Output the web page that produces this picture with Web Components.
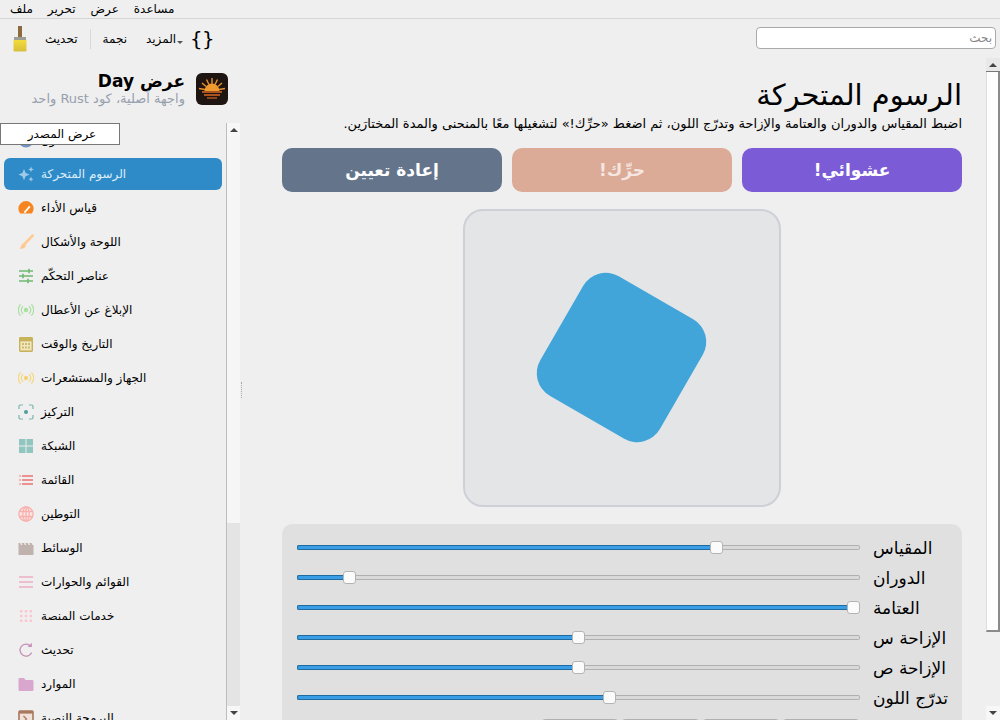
<!DOCTYPE html>
<html lang="ar">
<head>
<meta charset="utf-8">
<title>عرض Day</title>
<style>
html,body{margin:0;padding:0;height:720px;overflow:hidden;background:#efefef;color:#000;font-family:"DejaVu Sans",sans-serif;font-size:12px}
</style>
</head>
<body>
<x-app>
  <x-menubar slot="menu"><span>ملف</span><span>تحرير</span><span>عرض</span><span>مساعدة</span></x-menubar>
  <x-toolbar slot="tools"></x-toolbar>
  <x-sidebar slot="side">
    <x-nav icon="about">حول</x-nav>
    <x-nav icon="sparkle" selected>الرسوم المتحركة</x-nav>
    <x-nav icon="gauge">قياس الأداء</x-nav>
    <x-nav icon="brush">اللوحة والأشكال</x-nav>
    <x-nav icon="sliders">عناصر التحكّم</x-nav>
    <x-nav icon="signal">الإبلاغ عن الأعطال</x-nav>
    <x-nav icon="calendar">التاريخ والوقت</x-nav>
    <x-nav icon="sensor">الجهاز والمستشعرات</x-nav>
    <x-nav icon="focus">التركيز</x-nav>
    <x-nav icon="grid">الشبكة</x-nav>
    <x-nav icon="list">القائمة</x-nav>
    <x-nav icon="globe">التوطين</x-nav>
    <x-nav icon="media">الوسائط</x-nav>
    <x-nav icon="menu">القوائم والحوارات</x-nav>
    <x-nav icon="apps">خدمات المنصة</x-nav>
    <x-nav icon="refresh">تحديث</x-nav>
    <x-nav icon="folder">الموارد</x-nav>
    <x-nav icon="script">البرمجة النصية</x-nav>
  </x-sidebar>
  <x-main slot="main">
    <x-page-title>الرسوم المتحركة</x-page-title>
    <x-desc>اضبط المقياس والدوران والعتامة والإزاحة وتدرّج اللون، ثم اضغط «حرِّك!» لتشغيلها معًا بالمنحنى والمدة المختارَين.</x-desc>
    <x-actions>
      <x-action color="#64748b">إعادة تعيين</x-action>
      <x-action color="#dcab98" dim>حرِّك!</x-action>
      <x-action color="#7b5cd6">عشوائي!</x-action>
    </x-actions>
    <x-preview></x-preview>
    <x-controls>
      <x-slider value="0.751">المقياس</x-slider>
      <x-slider value="0.0836">الدوران</x-slider>
      <x-slider value="1">العتامة</x-slider>
      <x-slider value="0.5">الإزاحة س</x-slider>
      <x-slider value="0.5">الإزاحة ص</x-slider>
      <x-slider value="0.556">تدرّج اللون</x-slider>
      <x-segments></x-segments>
    </x-controls>
  </x-main>
</x-app>
<script>
const ICONS = {
  about:'<circle cx="8" cy="8" r="7.5" fill="#6f93c4"/>',
  sparkle:'<g fill="#9fcbe8"><path d="M6 3 L7.6 7 L11.6 8.6 L7.6 10.2 L6 14.2 L4.4 10.2 L.4 8.6 L4.4 7Z"/><path d="M13 .6 L13.8 2.6 L15.8 3.4 L13.8 4.2 L13 6.2 L12.2 4.2 L10.2 3.4 L12.2 2.6Z"/><path d="M13 10.6 L13.8 12.4 L15.6 13.2 L13.8 14 L13 15.8 L12.2 14 L10.4 13.2 L12.2 12.4Z"/></g>',
  gauge:'<path d="M2.2 13.6 A7.6 7.6 0 1 1 13.8 13.6Z" fill="#f6851f"/><path d="M6.4 12.6 L11.8 6.4" stroke="#fff" stroke-width="1.8"/>',
  brush:'<path d="M14.6 1.6 L6.6 9.8" stroke="#ffc98f" stroke-width="2.6" stroke-linecap="round"/><path d="M5.6 9.6 C2.8 10.2 3.6 13 1.4 14.6 C4.4 15.4 8 13.8 7.8 11.6Z" fill="#ffc890"/>',
  sliders:'<g stroke="#6fb872" stroke-width="1.3" fill="none"><path d="M1 3H15M1 8H15M1 13H15"/><path d="M11 .8V5.2M5 5.8V10.2M10 10.8V15.2" stroke-width="1.6"/></g>',
  signal:'<g fill="none" stroke="#a8e0a0" stroke-width="1.2"><circle cx="8" cy="8" r="1.6" fill="#a8e0a0"/><path d="M5 4.2A5 5 0 0 0 5 11.8M11 4.2A5 5 0 0 1 11 11.8M2.6 2.4A8 8 0 0 0 2.6 13.6M13.4 2.4A8 8 0 0 1 13.4 13.6"/></g>',
  calendar:'<rect x="1" y="1" width="14" height="15" rx="1.4" fill="#c8b25a"/><rect x="2.4" y="5.4" width="11.2" height="9" fill="#f1e7bf"/><g fill="#cfbb70"><rect x="4" y="7" width="2" height="2"/><rect x="7" y="7" width="2" height="2"/><rect x="10" y="7" width="2" height="2"/><rect x="4" y="10.5" width="2" height="2"/><rect x="7" y="10.5" width="2" height="2"/><rect x="10" y="10.5" width="2" height="2"/></g>',
  sensor:'<g fill="none" stroke="#f5d67c" stroke-width="1.2"><circle cx="8" cy="8" r="1.6" fill="#f5c95c"/><path d="M5 4.2A5 5 0 0 0 5 11.8M11 4.2A5 5 0 0 1 11 11.8M2.6 2.4A8 8 0 0 0 2.6 13.6M13.4 2.4A8 8 0 0 1 13.4 13.6"/></g>',
  focus:'<g fill="none" stroke="#7ab5b0" stroke-width="1.2"><path d="M1 5V2.4Q1 1 2.4 1H5M11 1H13.6Q15 1 15 2.4V5M15 11V13.6Q15 15 13.6 15H11M5 15H2.4Q1 15 1 13.6V11"/></g><circle cx="8" cy="8" r="2" fill="#4f9f99"/>',
  grid:'<g fill="#90c6bd"><rect x="1" y="1" width="6.5" height="6.5"/><rect x="8.5" y="1" width="6.5" height="6.5"/><rect x="1" y="8.5" width="6.5" height="6.5"/><rect x="8.5" y="8.5" width="6.5" height="6.5"/></g>',
  list:'<g stroke="#ee9090" stroke-width="1.8"><path d="M4 4H15M4 8H15M4 12H15"/><path d="M1 4H3M1 8H3M1 12H3" stroke="#f5b5b5"/></g>',
  globe:'<g fill="#fde6e4" stroke="#f7b0ac" stroke-width="1.3"><circle cx="8" cy="8" r="7.1"/><ellipse cx="8" cy="8" rx="3.2" ry="7.1"/><path d="M8 .9V15.1M1.2 5.5H14.8M1.2 10.5H14.8"/></g>',
  media:'<path d="M.5 3H2.2L3 5H4.4L3.6 3H6L6.8 5H8.2L7.4 3H9.8L10.6 5H12L11.2 3H13.6L14.4 5H15.5V15H.5Z" fill="#c0b2ad"/>',
  menu:'<g stroke="#eeadc4" stroke-width="1.7"><path d="M1 3H15M1 8H15M1 13H15"/></g>',
  apps:'<g fill="#fcc4d3"><rect x="2" y="2" width="2.4" height="2.4"/><rect x="6.8" y="2" width="2.4" height="2.4"/><rect x="11.6" y="2" width="2.4" height="2.4"/><rect x="2" y="6.8" width="2.4" height="2.4"/><rect x="6.8" y="6.8" width="2.4" height="2.4"/><rect x="11.6" y="6.8" width="2.4" height="2.4"/><rect x="2" y="11.6" width="2.4" height="2.4"/><rect x="6.8" y="11.6" width="2.4" height="2.4"/><rect x="11.6" y="11.6" width="2.4" height="2.4"/></g>',
  refresh:'<path d="M13.6 10.4A6 6 0 1 1 12.4 4" fill="none" stroke="#c88fb5" stroke-width="1.3"/><path d="M13.8 .8V5H9.6Z" fill="#c88fb5"/>',
  folder:'<path d="M.5 3.2Q.5 2 1.7 2H6L7.6 4H14.3Q15.5 4 15.5 5.2V13.8Q15.5 15 14.3 15H1.7Q.5 15 .5 13.8Z" fill="#d9a6cd"/>',
  script:'<rect x="1" y="1" width="14" height="14" rx="1" fill="#f0e2da" stroke="#a9785e" stroke-width="1.6"/><rect x="1" y="1" width="14" height="2.6" fill="#a9785e"/><path d="M5.5 6L8.5 9L5.5 12" fill="none" stroke="#a9785e" stroke-width="1.2"/>'
};

function define(name, css, html, init){
  customElements.define(name, class extends HTMLElement{
    constructor(){ super(); this.attachShadow({mode:'open'}); }
    connectedCallback(){
      this.shadowRoot.innerHTML = '<style>'+css+'</style>'+(typeof html==='function'?html(this):html);
      if(init) init(this);
    }
  });
}

define('x-app',
 ':host{display:grid;grid-template-rows:19px 39px 662px;grid-template-columns:240px 760px;height:720px;overflow:hidden;position:relative}'+
 '.a{grid-column:1/3}.tip{position:absolute;left:0;top:123px;box-sizing:border-box;width:120px;height:22px;background:#fff;border:1px solid #777;font-size:12px;display:flex;align-items:center;justify-content:center;direction:rtl;padding-left:4px}',
 '<div class="a"><slot name="menu"></slot></div><div class="a"><slot name="tools"></slot></div><slot name="side"></slot><slot name="main"></slot><div class="tip">عرض المصدر</div>');

define('x-menubar',
 ':host{display:flex;box-sizing:border-box;height:19px;gap:15px;padding:0 0 0 10px;border-bottom:1px solid #d4d4d4;font-size:12px;line-height:17px;align-items:center}',
 '<slot></slot>');

define('x-toolbar',
 ':host{display:flex;box-sizing:border-box;height:39px;align-items:center;padding:0 4px 0 10px;font-size:12px}'+
 'svg{display:block}.t{direction:rtl}.up{margin-left:15px}.sep{width:1px;height:20px;background:#d8d8d8;margin:0 12px}.more{margin-left:19px}'+
 '.arr{width:0;height:0;border:3px solid transparent;border-top:3px solid #555;border-bottom:0;margin:8px 0 0 1px}'+
 '.brace{font:20px "DejaVu Sans Mono",monospace;margin-left:7px;white-space:nowrap}'+
 '.s{margin-left:auto;margin-bottom:2px;box-sizing:border-box;width:240px;height:22px;background:#fff;border:1px solid #aaa;border-radius:4px;direction:rtl;color:#888;font-size:12px;line-height:20px;padding:0 3px}',
 '<svg width="20" height="26" viewBox="0 0 20 26"><defs><linearGradient id="y" x1="0" y1="0" x2="0" y2="1"><stop offset="0" stop-color="#f3dc3a"/><stop offset="1" stop-color="#d8bf3a"/></linearGradient></defs><rect x="8" y="0" width="4" height="11" fill="#8b6a3e"/><rect x="4" y="11" width="12" height="3" fill="#9d9d95"/><path d="M3.5 14H16.5V24.5Q16.5 25.5 15.5 25.5H4.5Q3.5 25.5 3.5 24.5Z" fill="url(#y)"/></svg>'+
 '<span class="t up">تحديث</span><span class="sep"></span><span class="t">نجمة</span><span class="t more">المزيد</span><span class="arr"></span><span class="brace">{}</span><div class="s">بحث</div>');

define('x-sidebar',
 ':host{display:flex;flex-direction:column;height:662px;width:240px;overflow:hidden}'+
 '.h{display:flex;height:65px;box-sizing:border-box;padding:15px 12px 0 0;justify-content:flex-end;gap:11px;flex:none}'+
 '.tx{direction:rtl;text-align:right}.ti{font-size:17px;font-weight:bold;line-height:16px}.su{font-size:13px;color:#97a0ae;line-height:16px;margin-top:2px}'+
 '.b{display:flex;flex:1;min-height:0}.l{flex:1;min-width:0;padding:1px 4px 0;display:flex;flex-direction:column;gap:2px;overflow:hidden;border-right:1px solid #bdbdbd}',
 '<div class="h"><div class="tx"><div class="ti">عرض Day</div><div class="su">واجهة أصلية، كود Rust واحد</div></div>'+
 '<svg width="32" height="32" viewBox="0 0 32 32"><rect width="32" height="32" rx="6" fill="#1e1412"/><g stroke="#e8922e" stroke-width="1.4"><path d="M16 5V11M10.5 6.5L13 11.5M21.5 6.5L19 11.5M6 10L10 13.5M26 10L22 13.5M3 15.5L9 16.5M29 15.5L23 16.5"/></g><path d="M8.5 18A7.5 7.5 0 0 1 23.5 18Z" fill="#ef9a2e"/><rect x="6" y="18" width="20" height="2" fill="#a9531f"/><rect x="8" y="21" width="16" height="2" fill="#a9531f"/><rect x="11" y="24" width="10" height="2" fill="#8c4119"/></svg></div>'+
 '<div class="b"><div class="l"><slot></slot></div><x-scroll type="side"></x-scroll></div>');

define('x-nav',
 ':host{display:flex;flex:none;height:32px;align-items:center;gap:7px;padding:0 0 0 14px;border-radius:6px;font-size:12px;line-height:16px}'+
 ':host([selected]){background:#2f8bc8;color:#dcedf8}svg{flex:none;display:block}',
 el=>'<svg width="16" height="16" viewBox="0 0 16 16">'+(ICONS[el.getAttribute('icon')]||'')+'</svg><span dir="rtl"><slot></slot></span>');

define('x-scroll',
 ':host{display:flex;flex-direction:column;flex:none;width:13px;background:#e4e4e4}'+
 '.btn{flex:none;height:14px;background:#f7f7f7;display:flex;align-items:center;justify-content:center;box-sizing:border-box}'+
 '.up i{border:4px solid transparent;border-top:0;border-bottom:4px solid #444;display:block}.dn i{border:4px solid transparent;border-bottom:0;border-top:4px solid #444;display:block}'+
 '.th{background:#f6f6f6;flex:none}.tr{flex:1}'+
 ':host([type=main]){width:14px;background:#efefef}:host([type=main]) .th{background:#fdfdfd;border-bottom:2px solid #8a8a8a;border-right:2px solid #8a8a8a;border-left:1px solid #ddd}'+
 ':host([type=main]) .up{background:#e8e8e8;border-bottom:1px solid #777}',
 el=>{const m=el.getAttribute('type')==='main';return '<div class="btn up"><i></i></div><div class="th" style="height:'+(m?560:386)+'px;box-sizing:border-box"></div><div class="tr"></div><div class="btn dn"><i></i></div>'});

define('x-main',
 ':host{display:flex;height:662px;width:760px;overflow:hidden;position:relative}'+
 '.c{flex:1;min-width:0;padding:0 24px 0 42px;display:flex;flex-direction:column;overflow:hidden}'+
 '.grip{position:absolute;left:1px;top:324px;height:16px;border-left:1px dotted #aaa}',
 '<div class="c"><slot></slot></div><x-scroll type="main"></x-scroll><div class="grip"></div>');

define('x-page-title',
 ':host{display:block;flex:none;direction:rtl;font-size:29px;line-height:34px;margin-top:20px}','<slot></slot>');
define('x-desc',
 ':host{display:block;flex:none;direction:rtl;font-size:13px;line-height:16px;margin-top:4px;white-space:nowrap}','<slot></slot>');
define('x-actions',
 ':host{display:flex;flex:none;gap:10px;margin-top:16px;flex-direction:row}','<slot></slot>');
define('x-action',
 ':host{display:flex;flex:1;height:44px;align-items:center;justify-content:center;border-radius:10px;color:#fff;font-weight:bold;font-size:17px;direction:rtl}:host([dim]) span{opacity:.7}',
 el=>'<style>:host{background:'+el.getAttribute('color')+'}</style><span><slot></slot></span>');
define('x-preview',
 ':host{display:flex;flex:none;box-sizing:border-box;width:318px;height:298px;margin:17px auto 0;background:#e4e5e7;border:2px solid #cdd0d6;border-radius:20px;align-items:center;justify-content:center}'+
 'div{width:138px;height:138px;border-radius:26px;background:#41a5d9;flex:none;transform:translate(-.5px,-.5px) rotate(30deg)}','<div></div>');
define('x-controls',
 ':host{display:flex;flex:none;flex-direction:column;gap:8px;box-sizing:border-box;margin-top:17px;padding:12px 15px 10px;background:#e0e0e0;border-radius:10px 10px 0 0}','<slot></slot>');
define('x-slider',
 ':host{display:flex;height:22px;align-items:center;gap:13px;font-size:17px}'+
 '.t{display:flex;align-items:center;width:563px;flex:none}'+
 '.f{height:5px;box-sizing:border-box;background:#3a9ee6;border:1px solid #1f6a9e;border-radius:2px 0 0 2px;border-right:0;flex:none}'+
 '.r{height:5px;box-sizing:border-box;background:#d9d9d9;border:1px solid #b0b0b0;border-radius:0 2px 2px 0;border-left:0;flex:none}'+
 '.k{width:13px;height:13px;flex:none;box-sizing:border-box;background:#fbfbfb;border:1px solid #b4b4b4;border-radius:3px}'+
 '.l{direction:rtl;text-align:left;white-space:nowrap;margin-top:2px}',
 el=>{const v=parseFloat(el.getAttribute('value'));const w=Math.round(v*550);return '<div class="t"><div class="f" style="width:'+w+'px"></div><div class="k"></div>'+(w<550?'<div class="r" style="width:'+(550-w)+'px"></div>':'')+'</div><div class="l"><slot></slot></div>'});
define('x-segments',
 ':host{display:flex;height:24px;width:319px;margin-left:244px;gap:2px;margin-top:3px}div{flex:1;box-sizing:border-box;border:1px solid #b0b0b0;border-radius:4px;background:#f0f0f0}',
 '<div></div><div></div><div></div><div></div>');
</script>
</body>
</html>
